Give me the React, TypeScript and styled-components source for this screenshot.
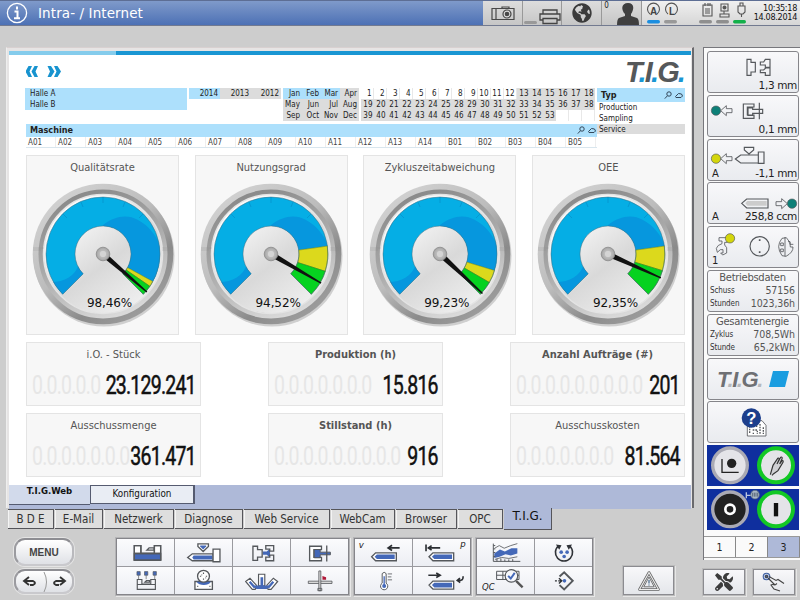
import * as React from 'react';
import styled, { createGlobalStyle } from 'styled-components';
import { FaGlobeAmericas, FaTools } from 'react-icons/fa';

interface IGauge {
  title: string;
  value: number;
  label: string;
  yellow: number;
  green: number;
}

interface ICounter {
  title: string;
  value: string;
  zeros: number;
  bold?: boolean;
}

const GAUGES: IGauge[] = [
  { title: 'Qualitätsrate', value: 98.46, label: '98,46%', yellow: 28.9, green: 34.6 },
  { title: 'Nutzungsgrad', value: 94.52, label: '94,52%', yellow: -8, green: 17.7 },
  { title: 'Zykluszeitabweichung', value: 99.23, label: '99,23%', yellow: 16.8, green: 30 },
  { title: 'OEE', value: 92.35, label: '92,35%', yellow: -8, green: 17 },
];

const COUNTERS: ICounter[] = [
  { title: 'i.O. - Stück', value: '23.129.241', zeros: 5 },
  { title: 'Produktion (h)', value: '15.816', zeros: 7, bold: true },
  { title: 'Anzahl Aufträge (#)', value: '201', zeros: 9, bold: true },
  { title: 'Ausschussmenge', value: '361.471', zeros: 7 },
  { title: 'Stillstand (h)', value: '916', zeros: 9, bold: true },
  { title: 'Ausschusskosten', value: '81.564', zeros: 7 },
];

const MONTHS = ['Jan', 'Feb', 'Mar', 'Apr', 'May', 'Jun', 'Jul', 'Aug', 'Sep', 'Oct', 'Nov', 'Dec'];
const WEEKS = [
  1, 2, 3, 4, 5, 6, 7, 8, 9, 10, 11, 12, 13, 14, 15, 16, 17, 18,
  19, 20, 21, 22, 23, 24, 25, 28, 29, 30, 31, 32, 33, 34, 35, 36, 37, 38,
  39, 40, 41, 42, 43, 44, 45, 46, 47, 48, 49, 50, 51, 52, 53, null, null, null,
];
const MACHINES = [
  'A01', 'A02', 'A03', 'A04', 'A05', 'A06', 'A07', 'A08', 'A09', 'A10',
  'A11', 'A12', 'A13', 'A14', 'B01', 'B02', 'B03', 'B04', 'B05',
];
const TABS = [
  { name: 'B D E', width: 46 },
  { name: 'E-Mail', width: 48 },
  { name: 'Netzwerk', width: 70 },
  { name: 'Diagnose', width: 68 },
  { name: 'Web Service', width: 86 },
  { name: 'WebCam', width: 64 },
  { name: 'Browser', width: 61 },
  { name: 'OPC', width: 45 },
];

const BLUE = '#4468b8';
const LINE = '#55585c';

const point = (angle: number, radius: number) => {
  const rad = (angle * Math.PI) / 180;
  return `${(radius * Math.cos(rad)).toFixed(2)} ${(radius * Math.sin(rad)).toFixed(2)}`;
};

const sector = (from: number, to: number, inner = 28, outer = 57) => {
  const large = to - from > 180 ? 1 : 0;
  return `M${point(from, outer)}A${outer} ${outer} 0 ${large} 1 ${point(to, outer)}L${point(to, inner)}A${inner} ${inner} 0 ${large} 0 ${point(from, inner)}Z`;
};

const GaugeDial = ({ gauge, id }: { gauge: IGauge; id: string }) => {
  const needle = -225 + (gauge.value / 100) * 270;
  return (
    <svg width='150' height='150' viewBox='-75 -75 150 150'>
      <defs>
        <linearGradient id={`${id}-rim`} x1='0.1' y1='0' x2='0.9' y2='1'>
          <stop offset='0' stopColor='#d6d6d6' />
          <stop offset='0.45' stopColor='#bcbcbc' />
          <stop offset='0.7' stopColor='#8b8b8b' />
          <stop offset='1' stopColor='#a5a5a5' />
        </linearGradient>
        <linearGradient id={`${id}-ring`} x1='0.2' y1='0' x2='0.6' y2='1'>
          <stop offset='0' stopColor='#878787' />
          <stop offset='0.5' stopColor='#a9a9a9' />
          <stop offset='1' stopColor='#d9d9d9' />
        </linearGradient>
        <linearGradient id={`${id}-face`} x1='0.2' y1='0.2' x2='0.8' y2='1'>
          <stop offset='0' stopColor='#fafafa' />
          <stop offset='0.5' stopColor='#d9d9d9' />
          <stop offset='1' stopColor='#f2f2f2' />
        </linearGradient>
        <radialGradient id={`${id}-hub`}>
          <stop offset='0' stopColor='#e2e2e2' />
          <stop offset='1' stopColor='#a0a0a0' />
        </radialGradient>
        <clipPath id={`${id}-clip`}>
          <path d={sector(-225, gauge.yellow)} />
        </clipPath>
      </defs>
      <circle cx='1' cy='2' r='70.5' fill='#000' opacity='0.16' />
      <circle r='70.3' fill={`url(#${id}-rim)`} />
      <circle r='62' fill='none' stroke={`url(#${id}-ring)`} strokeWidth='5' />
      <circle r='59.5' fill={`url(#${id}-face)`} stroke='#e4e4e4' strokeWidth='1.5' />
      <path d='M-70-6h11M-70-4h8M59-6h11M59-4h9' stroke='#888' strokeWidth='0.5' opacity='0.6' />
      <g clipPath={`url(#${id}-clip)`}>
        <rect x='-60' y='-60' width='120' height='120' fill='#05aee5' />
        <path d='M0-29C12-38 24-40 35-34C45-29 54-18 57-8L62 45H20L0 0Z' fill='#0697de' />
        <path d='M-52 28C-38 28-28 22-24 10L-15 30L-40 60L-60 40Z' fill='#0697de' />
        <path d='M0-57v6M22-52l-2 5M40-40l-4 4M-22-52l2 5M-40-40l4 4' stroke='#078bc4' strokeWidth='0.6' />
      </g>
      <path d={sector(gauge.yellow, gauge.green)} fill='#dcd91c' stroke='#5b7a18' strokeWidth='0.5' />
      <path d={sector(gauge.green, 45)} fill='#06d220' stroke='#2a7a18' strokeWidth='0.5' />
      <path d={sector(-225, 45)} fill='none' stroke='#3c6c80' strokeWidth='0.5' />
      <path d='M4-2.6L58-0.7V0.7L4 2.6Z' fill='#111' transform={`rotate(${needle})`} />
      <circle r='6.8' fill={`url(#${id}-hub)`} stroke='#8a8a8a' strokeWidth='0.8' />
      <circle r='3.8' fill='#d4d4d4' stroke='#aaa' strokeWidth='0.6' />
    </svg>
  );
};

const Nozzle = ({ x, y }: { x: number; y: number }) => (
  <g transform={`translate(${x} ${y})`}>
    <path d='M0 12L12 0H75V24H12Z' fill='#fff' stroke={LINE} strokeWidth='4' />
    <path d='M9 12l7-7h54v14H16z' fill={BLUE} stroke='none' />
  </g>
);

const ToolText = styled.text`
  font: italic 26px 'DejaVu Sans', sans-serif;
  fill: #222;
  stroke: none;
`;

/* Every tool is drawn on a 172 x 82 canvas, one canvas per cell */
const TOOLS: Record<string, React.ReactNode> = {
  machine: (
    <>
      <path d='M52 20h20v24h41V20h19v44H52z' fill='#fff' />
      <path d='M52 44h80v20H52z' fill={BLUE} />
      <path d='M52 20h20v24h41V20h19v44H52zM52 44h80M90 34l7-7h15v7z' />
    </>
  ),
  injection: (
    <>
      <path d='M38 56L52 45h63v21H52z' fill='#fff' />
      <path d='M52 56l4-6h57v12H56z' fill={BLUE} stroke='none' />
      <path d='M115 31h21v38h-21z' fill='#fff' />
      <path d='M69 15h32v8L85 38L69 23z' fill='#fff' />
      <path d='M76 20h18v3l-9 9-9-9z' fill={BLUE} stroke='none' />
    </>
  ),
  mould: (
    <>
      <path d='M90 38h12l10-9v28l-10-9H90z' fill={BLUE} stroke='none' />
      <path d='M60 22h14v10h14v23H74v10H60zM123 20H99v11h12v6h12zM123 66H99V55h12v-6h12z' fill='none' />
    </>
  ),
  ejector: (
    <>
      <path d='M92 22H56v44h36V56H69V32h23z' fill='#fff' />
      <path d='M70 32h18v8h31v8H88v9H70z' fill={BLUE} strokeWidth='3' />
      <path d='M108 20v48' />
    </>
  ),
  heating: (
    <>
      <path d='M60 14h10v11H60zM83 14h10v11H83zM109 14h10v11h-10z' fill={BLUE} strokeWidth='2' />
      <path d='M65 25v12M88 25v12M114 25v12' strokeWidth='2' />
      <path d='M61 38h14v14h27V38h14v30H61zM61 53h55M84 46l5-5h9v5z' fill='none' strokeWidth='3.5' />
    </>
  ),
  drive: (
    <>
      <path d='M60 44h53v24H60z' fill='#fff' />
      <path d='M65 45h43c-6 13-36 13-43 0z' fill={BLUE} stroke='none' />
      <circle cx='86' cy='28' r='18' fill='#fff' />
      <path d='M86 17v4M86 35v4M75 28h4M93 28h4M80 24h2M92 33h2M67 59h3M104 59h3' strokeWidth='3.5' />
    </>
  ),
  fan: (
    <>
      <path d='M38 44l13-10 20 22-4 12H58zM135 44l-13-10-20 22 4 12h9z' fill='#fff' strokeWidth='3.5' />
      <path d='M50 45l16 18M122 45l-16 18' stroke={BLUE} strokeWidth='7' />
      <path d='M77 22h19v35H77z' fill='#fff' strokeWidth='3.5' />
      <path d='M83 31h8v25h19l-7 11H70l-7-11h20z' fill={BLUE} stroke='none' />
    </>
  ),
  robot: (
    <>
      <path d='M52 43h72v7H52z' fill='#ddd' strokeWidth='2.5' />
      <path d='M84 12h6v60h-6zM81 65h12v7H81z' fill='#ddd' strokeWidth='2.5' />
      <path d='M95 27l11 4v8H95z' fill='#b01838' stroke='none' />
    </>
  ),
  velocity: (
    <>
      <ToolText x='11' y='27'>v</ToolText>
      <path d='M100 27h35M112 19l-12 8 12 8' fill='none' stroke='#2c2f33' strokeWidth='5' />
      <Nozzle x={50} y={42} />
    </>
  ),
  pressure: (
    <>
      <path d='M39 17v20M45 27h37M56 20l-10 7 10 7' fill='none' stroke='#2c2f33' strokeWidth='5' />
      <ToolText x='143' y='25'>p</ToolText>
      <Nozzle x={48} y={42} />
    </>
  ),
  temperature: (
    <>
      <path d='M82 49V20q6-8 12 0v29a11 11 0 1 1-12 0z' fill='#fff' strokeWidth='3' />
      <path d='M88 28v30' stroke={BLUE} strokeWidth='4' />
      <circle cx='88' cy='58' r='6' fill={BLUE} stroke='none' />
      <path d='M99 21h13M99 30h11M99 39h13' strokeWidth='2.5' />
    </>
  ),
  plasticize: (
    <>
      <path d='M46 25h35M70 18l12 7-12 7' fill='none' stroke='#2c2f33' strokeWidth='5' />
      <path d='M151 28q4 14-15 13M142 34l-8 7 9 6' fill='none' stroke='#2c2f33' strokeWidth='5' />
      <Nozzle x={48} y={43} />
    </>
  ),
  trend: (
    <>
      <path d='M52 44l17-12 15 6 20-10h18v16l-20 6-16-4-18 8-16 4z' fill={BLUE} stroke='none' />
      <path d='M49 14v54h82M49 20h6M49 30h6M49 41h6M49 53h6M60 68v-8M72 68v-9M84 68v-6M96 68v-6M108 68v-7' fill='none' strokeWidth='3' />
      <path d='M53 28l14-8 15 8 20-8 20-6M54 62l20-6 22 3 26-5' fill='none' strokeWidth='2.5' />
    </>
  ),
  cycle: (
    <>
      <path d='M72 20A26 26 0 1 0 103 20' fill='none' stroke='#303338' strokeWidth='5' />
      <path d='M63 17l17 2-7 14zM112 17l-17 2 7 14z' fill='#303338' stroke='none' />
      <circle cx='79' cy='40' r='5.5' fill={BLUE} stroke='none' />
      <circle cx='97' cy='40' r='5.5' fill={BLUE} stroke='none' />
      <circle cx='88' cy='53' r='5.5' fill={BLUE} stroke='none' />
    </>
  ),
  quality: (
    <>
      <path d='M59 13h68v25H59zM59 25h68M78 13v25' fill='none' strokeWidth='3' />
      <path d='M118 42l20 20' stroke='#555' strokeWidth='7' />
      <circle cx='104' cy='27' r='19' fill='#f6f7fb' strokeWidth='3.5' />
      <path d='M94 27l8 8 12-17' fill='none' stroke={BLUE} strokeWidth='6' />
      <ToolText x='15' y='70'>QC</ToolText>
    </>
  ),
  target: (
    <>
      <path d='M74 29L88 16l26 26-26 26-14-13' fill='none' strokeWidth='6' />
      <path d='M60 42h6M70 42h8M72 34l9 8-9 8' fill='none' stroke='#2c2f33' strokeWidth='4' />
      <circle cx='89' cy='42' r='5.5' fill={BLUE} stroke='none' />
    </>
  ),
};

const Tool = ({ name }: { name: string }) => (
  <ToolCell>
    <svg width='57' height='27' viewBox='0 0 172 82' fill='none' stroke={LINE} strokeWidth='4'>
      {TOOLS[name]}
    </svg>
  </ToolCell>
);

const Drawing = ({ children }: { children: React.ReactNode }) => (
  <svg width='92' height='40' viewBox='0 0 276 120' fill='none' stroke='#55585c' strokeWidth='3.5'>
    {children}
  </svg>
);

const SearchMarks = () => (
  <svg width='20' height='9' viewBox='0 0 20 9' fill='none' stroke='#33475a'>
    <circle cx='5' cy='3' r='2.2' />
    <path d='M3.4 4.8L0.8 7.6M11.5 5.5l3-3 3 .5 1 2-1.5 1.5h-5z' />
  </svg>
);

const Header = () => (
  <HeaderBar>
    <Title>
      <svg width='22' height='22' viewBox='0 0 22 22' fill='none' stroke='#fff'>
        <circle cx='11' cy='11' r='9.6' strokeWidth='1.3' />
        <path d='M11 4.5v3M8.5 9.5h3v6.5M8 16.3h6' strokeWidth='2' />
      </svg>
      Intra- / Internet
    </Title>
    <StatusCell $width={40}>
      <svg width='24' height='15' viewBox='0 0 24 15' fill='none' stroke='#484848' strokeWidth='1.2'>
        <path d='M1 2.5h22v11H1zM5 2.5v11M11 2.5V1h7v1.5' />
        <circle cx='16' cy='8' r='4' fill='#ddd' />
        <circle cx='16' cy='8' r='1.7' fill='#484848' />
      </svg>
    </StatusCell>
    <StatusCell $width={39}>
      <svg width='38' height='24' viewBox='0 0 38 24' fill='none' stroke='#444' strokeWidth='1.3'>
        <rect x='1' y='20' width='13' height='3' rx='1.5' fill='#999' stroke='none' />
        <path d='M20 13V9h14v4M20 19h-3v-6h20v6h-3M20 17.5h14v5H20z' />
      </svg>
    </StatusCell>
    <StatusCell $width={40}>
      <FaGlobeAmericas size={20} color='#3b3b3b' />
    </StatusCell>
    <StatusCell $width={40}>
      <UserCount>0</UserCount>
      <svg width='23' height='24' viewBox='0 0 23 24' fill='#3f3f3f'>
        <path d='M12 2c7 0 6 7 3 11v2l6 2q2 1 2 7H1q0-6 2-7l6-2v-2C5 9 5 2 12 2z' />
      </svg>
    </StatusCell>
    <StatusTray>
      <svg width='108' height='24' viewBox='0 0 108 24' fill='none' stroke='#555' strokeWidth='1.1'>
        <path d='M6 13A6 6 0 1 1 13 13M24 13A6 6 0 1 1 31 13' />
        <TrayText x='6' y='14'>A</TrayText>
        <TrayText x='25' y='14'>L</TrayText>
        <path d='M59 4h9v11h-9zM61 2v3M64 2v3M66 2v3M61 8h5M61 10h5M61 12h5M77 3h7v7h-7zM80 10v3M76 13h9v3h-9zM96 2h3v3h-3zM94 5h7v6l-2 2h-3l-2-2zM97.5 13v3' />
        <circle cx='80.5' cy='6.5' r='1.5' fill='#555' />
        <rect x='3' y='19' width='13' height='3.5' rx='1.7' fill='#1b8ee0' stroke='none' />
        <rect x='20' y='19' width='13' height='3.5' rx='1.7' fill='#999' stroke='none' />
        <rect x='55' y='19' width='13' height='3.5' rx='1.7' fill='#8f8f8f' stroke='none' />
        <rect x='72' y='19' width='13' height='3.5' rx='1.7' fill='#8f8f8f' stroke='none' />
        <rect x='89' y='19' width='13' height='3.5' rx='1.7' fill='#13b04a' stroke='none' />
      </svg>
      <Clock>
        <span>10:35:18</span>
        <span>14.08.2014</span>
      </Clock>
    </StatusTray>
  </HeaderBar>
);

const Filters = () => (
  <FilterArea>
    <FilterLeft>
      <FilterRow>
        <Halls>
          <span>Halle A</span>
          <span>Halle B</span>
        </Halls>
        <Years>
          <Cell $tone='blue'>2014</Cell>
          <Cell $tone='grey'>2013</Cell>
          <Cell $tone='grey'>2012</Cell>
        </Years>
        <Months>
          {MONTHS.map((month, i) => (
            <Cell key={month} $tone={i < 3 ? 'blue' : 'grey'}>{month}</Cell>
          ))}
        </Months>
        <Weeks>
          {WEEKS.map((week, i) => (
            <WeekCell key={i} $tone={i < 12 || week === null ? 'white' : 'grey'}>{week}</WeekCell>
          ))}
        </Weeks>
      </FilterRow>
      <MachineHead>
        Maschine
        <SearchMarks />
      </MachineHead>
      <MachineRow>
        {MACHINES.map((machine) => (
          <span key={machine}>{machine}</span>
        ))}
      </MachineRow>
    </FilterLeft>
    <TypeBox>
      <TypeHead>
        Typ
        <SearchMarks />
      </TypeHead>
      <TypeItem>Production</TypeItem>
      <TypeItem>Sampling</TypeItem>
      <TypeItem $active>Service</TypeItem>
    </TypeBox>
  </FilterArea>
);

const Dashboard = () => (
  <Page>
    <Stripe />
    <LogoRow>
      <svg width='38' height='12' viewBox='0 0 38 12' fill='#1793cf'>
        <path d='M2.5 0H6L3.500 5.500L6 11H2.500L-0.500 5.500zM8.500 0H12L9.500 5.500L12 11H8.500L5.500 5.500zM25 0h-3.500L24 5.500L21.500 11H25l3.500-5.500zM31.500 0H28L30.500 5.500L28 11h3.500l3.500-5.500z' />
      </svg>
      <Logo $size={29}>
        T<i>.</i>I<i>.</i>G<i>.</i>
      </Logo>
    </LogoRow>
    <Filters />
    <Gauges>
      {GAUGES.map((gauge, i) => (
        <GaugeCard key={gauge.title}>
          <CardTitle>{gauge.title}</CardTitle>
          <GaugeDial gauge={gauge} id={`g${i}`} />
          <GaugeValue>{gauge.label}</GaugeValue>
        </GaugeCard>
      ))}
    </Gauges>
    <Counters>
      {COUNTERS.map((counter) => (
        <CounterCard key={counter.title}>
          <CardTitle $bold={counter.bold}>{counter.title}</CardTitle>
          <Digits>
            <Ghost aria-hidden>{Array(counter.zeros).fill('0').join('.')}</Ghost>
            <Value>{counter.value}</Value>
          </Digits>
        </CounterCard>
      ))}
    </Counters>
    <SubTabs>
      <SubTabActive>T.I.G.Web</SubTabActive>
      <SubTab>Konfiguration</SubTab>
    </SubTabs>
  </Page>
);

const Sidebar = () => (
  <SidebarBox>
    <SideButton>
      <Drawing>
        <path d='M117 22h12v9h13v29h-13v10h-12zM186 22h-14l-5 8h-10v9h15v7h14zM186 70h-14v-8h-15v-8h10l6-6h13z' />
      </Drawing>
      <SideValue>1,3 mm</SideValue>
    </SideButton>
    <SideButton>
      <Drawing>
        <circle cx='24' cy='44' r='14' fill='#0d8078' strokeWidth='2' />
        <path d='M38 44l17-15v9h17v12H55v9z' strokeWidth='2.5' />
        <path d='M138 24h-32v43h32v-10h-20V33h20zM120 36h14v4h30v12h-30v6h-14zM154 20v50' />
      </Drawing>
      <SideValue>0,1 mm</SideValue>
    </SideButton>
    <SideButton>
      <Drawing>
        <circle cx='24' cy='56' r='14' fill='#d4d60c' strokeWidth='2' />
        <path d='M38 56l17-15v9h17v12H55v9z' strokeWidth='2.5' />
        <path d='M82 57l16-12h53v24H98zM151 36h17v34h-17zM109 22h28v8l-14 12-14-12z' />
      </Drawing>
      <SideMode>A</SideMode>
      <SideValue>-1,1 mm</SideValue>
    </SideButton>
    <SideButton>
      <Drawing>
        <path d='M101 61l15-13h64v27h-64z' />
        <path d='M118 54h58v14h-58l-6-7z' fill='#ccc' stroke='none' />
        <circle cx='252' cy='62' r='14' fill='#0d8078' strokeWidth='2' />
        <path d='M238 62l-17-15v9h-17v12h17v9z' strokeWidth='2.5' />
      </Drawing>
      <SideMode>A</SideMode>
      <SideValue>258,8 ccm</SideValue>
    </SideButton>
    <SideButton>
      <Drawing>
        <path d='M58 32H33v10h9v8q-14 4-17 14l3 12 9-8h8v10h-7l6 6 12-6V62l-6-8v-8h8z' strokeWidth='2.5' />
        <circle cx='66' cy='34' r='14' fill='#d4d60c' strokeWidth='2' />
        <circle cx='155' cy='58' r='29' />
        <path d='M155 37v5M155 73v5' strokeWidth='5' />
        <path d='M222 34q-20 24 0 52l12 2q22-12 21-28h-8q3-14-12-28zM231 30v58M218 48h8v8h-8zM218 66h8v8h-8zM240 44h6v8h10' strokeWidth='2.5' />
      </Drawing>
      <SideMode>1</SideMode>
    </SideButton>
    <DataButton>
      <DataTitle>Betriebsdaten</DataTitle>
      <DataRow><small>Schuss</small>57156</DataRow>
      <DataRow><small>Stunden</small>1023,36h</DataRow>
    </DataButton>
    <DataButton>
      <DataTitle>Gesamtenergie</DataTitle>
      <DataRow><small>Zyklus</small>708,5Wh</DataRow>
      <DataRow><small>Stunde</small>65,2kWh</DataRow>
    </DataButton>
    <SideButton $center>
      <Logo $size={22} $muted>
        T<i>.</i>I<i>.</i>G<i>.</i>
      </Logo>
      <svg width='20' height='16' viewBox='0 0 20 16'>
        <path d='M4 0h16l-4 16H0z' fill='#1a9de0' />
      </svg>
    </SideButton>
    <SideButton>
      <Drawing>
        <path d='M118 56h44l12 14v32h-56z' fill='#fff' strokeWidth='2.5' />
        <path d='M125 72v24M134 74h8M134 84h14v12M156 66v30M166 76v20M146 70v8M134 94h4' strokeWidth='4' strokeDasharray='5 3' />
        <circle cx='130' cy='48' r='29' fill='#1c3e8c' stroke='none' />
        <HelpText x='130' y='66'>?</HelpText>
      </Drawing>
    </SideButton>
    <MotorPanel>
      <svg width='92' height='41' viewBox='0 0 276 123' fill='none'>
        <circle cx='69' cy='61' r='52' fill='#e4e4e8' stroke='#aaaab4' strokeWidth='10' />
        <path d='M45 42v40h50' stroke='#222' strokeWidth='4' />
        <circle cx='74' cy='55' r='14' fill='#222' />
        <circle cx='207' cy='61' r='51' fill='#e4e4e8' stroke='#12c825' strokeWidth='12' />
        <path d='M190 89l8-28 14-21q5-3 4 4l-6 13 11-20q6-3 4 5l-7 15 7-10q5-1 3 5l-15 25-13 9-5 5' stroke='#333' strokeWidth='3.5' fill='#d0d0d4' />
      </svg>
    </MotorPanel>
    <MotorPanel>
      <svg width='92' height='41' viewBox='0 0 276 123' fill='none'>
        <path d='M118 10v18M118 19h16' stroke='#b9c4e0' strokeWidth='4' />
        <circle cx='69' cy='61' r='52' fill='#222' stroke='#aaaab4' strokeWidth='10' />
        <circle cx='69' cy='61' r='14' stroke='#fff' strokeWidth='8' />
        <circle cx='207' cy='61' r='51' fill='#e4e4e8' stroke='#12c825' strokeWidth='12' />
        <path d='M207 42v40' stroke='#111' strokeWidth='13' />
        <circle cx='144' cy='17' r='13' fill='#a9b7c6' stroke='#567' strokeWidth='2' />
        <path d='M137 11v12M142 11v12M147 11v12M152 11v12' stroke='#345' strokeWidth='2' />
      </svg>
    </MotorPanel>
    <PageTabs>
      <PageTab>1</PageTab>
      <PageTab>2</PageTab>
      <PageTab $active>3</PageTab>
    </PageTabs>
  </SidebarBox>
);

const Footer = () => (
  <FooterBar>
    <MenuColumn>
      <MenuButton>MENU</MenuButton>
      <HistoryButton>
        <svg width='54' height='20' viewBox='0 0 54 20' fill='none' stroke='#333' strokeWidth='1.9'>
          <path d='M27 0q5 10 0 20' stroke='#999' strokeWidth='1' />
          <path d='M12 5L7 9l5 4M7 9h9q4 2 0 4h-3M43 5l5 4-5 4M48 9h-9q-4 2 0 4h3' />
        </svg>
      </HistoryButton>
    </MenuColumn>
    <ToolGroup $columns={4}>
      {['machine', 'injection', 'mould', 'ejector', 'heating', 'drive', 'fan', 'robot'].map((name) => (
        <Tool key={name} name={name} />
      ))}
    </ToolGroup>
    <ToolGroup $columns={2}>
      {['velocity', 'pressure', 'temperature', 'plasticize'].map((name) => (
        <Tool key={name} name={name} />
      ))}
    </ToolGroup>
    <ToolGroup $columns={2}>
      {['trend', 'cycle', 'quality', 'target'].map((name) => (
        <Tool key={name} name={name} />
      ))}
    </ToolGroup>
    <AlarmButton>
      <svg width='22' height='20' viewBox='0 0 22 20' fill='none' stroke='#666' strokeLinejoin='round'>
        <path d='M11 1.5L20.5 18.5H1.5z' strokeWidth='2.6' />
        <path d='M11 1.5L20.5 18.5H1.5z' stroke='#eee' strokeWidth='1.1' />
        <path d='M11 6L16.2 15.800H5.800z' strokeWidth='0.9' />
        <path d='M11 9v3.500M11 13.500v1' strokeWidth='1.200' stroke='#468' />
      </svg>
    </AlarmButton>
  </FooterBar>
);

const App = () => (
  <Screen>
    <GlobalStyle />
    <Header />
    <Body>
      <MainColumn>
        <Window>
          <Dashboard />
        </Window>
        <TabRow>
          {TABS.map((tab) => (
            <Tab key={tab.name} $width={tab.width}>{tab.name}</Tab>
          ))}
          <TabActive>T.I.G.</TabActive>
        </TabRow>
        <Footer />
      </MainColumn>
      <SideColumn>
        <Sidebar />
        <SideFooter>
          <FooterButton>
            <FaTools size={18} color='#3c3c3c' />
          </FooterButton>
          <FooterButton>
            <svg width='24' height='20' viewBox='0 0 24 20' fill='none' stroke='#444' strokeWidth='1.1'>
              <circle cx='4.5' cy='4.5' r='3.3' fill='#b8c8e8' stroke='#3f5fa0' />
              <circle cx='4.5' cy='4.5' r='1.2' fill='#3f5fa0' />
              <path d='M6 6l7 7q-3-1-4 0l3 4 6 2M7 4.5l7 4 2-1 6 4M13 13l2-1.5' />
            </svg>
          </FooterButton>
        </SideFooter>
      </SideColumn>
    </Body>
  </Screen>
);

export default App;

const GlobalStyle = createGlobalStyle`
  body {
    margin: 0;
  }
  * {
    box-sizing: border-box;
  }
  svg {
    display: block;
    flex: none;
  }
`;

const Screen = styled.div`
  width: 800px;
  height: 600px;
  overflow: hidden;
  display: flex;
  flex-direction: column;
  background: #cdcdcd;
  color: #222;
  font-family: 'DejaVu Sans Condensed', 'DejaVu Sans', sans-serif;
  white-space: nowrap;
`;

const HeaderBar = styled.header`
  display: flex;
  height: 26px;
  flex: none;
  border-top: 1px solid #5d6e94;
  border-bottom: 1px solid #727a90;
`;

const Title = styled.h1`
  margin: 0;
  width: 483px;
  padding: 0 5px 0 6px;
  display: flex;
  align-items: center;
  gap: 10px;
  color: #fff;
  font: 13.5px 'DejaVu Sans', sans-serif;
  letter-spacing: 0.1px;
  background: linear-gradient(#7f9aca, #4d71b5);
`;

const StatusCell = styled.div<{ $width: number }>`
  width: ${(props) => props.$width}px;
  display: flex;
  align-items: center;
  justify-content: center;
  background: linear-gradient(#ddd, #c6c6c6);
  border-right: 1px solid #999;
`;

const UserCount = styled.span`
  font-size: 8px;
  align-self: flex-start;
  margin-right: 7px;
`;

const StatusTray = styled.div`
  flex: 1;
  display: flex;
  align-items: center;
  justify-content: space-between;
  padding: 0 3px 0 2px;
  background: linear-gradient(#f0f0f0, #d6d6d6);
`;

const TrayText = styled.text`
  font: bold 10px 'Liberation Sans', sans-serif;
  fill: #444;
  stroke: none;
`;

const Clock = styled.div`
  display: flex;
  flex-direction: column;
  align-items: flex-end;
  font-size: 9px;
  line-height: 9px;
  letter-spacing: -0.3px;
  color: #111;
  margin-left: -8px;
`;

const Body = styled.div`
  display: flex;
  flex: 1;
  padding-top: 21px;
`;

const MainColumn = styled.div`
  width: 703px;
  display: flex;
  flex-direction: column;
`;

const Window = styled.main`
  width: 688px;
  height: 461px;
  margin-left: 6px;
  padding: 3px 0 0 2px;
  border-top: 1px solid #d8d0d0;
  border-left: 1px solid #eee;
  border-right: 2px solid #6a6a6e;
  background: #e6e4e4;
`;

const Page = styled.div`
  width: 682px;
  height: 457px;
  background: #fff;
`;

const Stripe = styled.div`
  height: 4px;
  background: linear-gradient(90deg, #85ccec 107px, #1a96d3 107px);
`;

const LogoRow = styled.div`
  display: flex;
  justify-content: space-between;
  align-items: center;
  height: 33px;
  padding: 0 7px 0 17px;
`;

const Logo = styled.div<{ $size: number; $muted?: boolean }>`
  font: italic bold ${(props) => props.$size}px 'Liberation Sans', sans-serif;
  letter-spacing: ${(props) => -props.$size * 0.065}px;
  color: ${(props) => (props.$muted ? '#6e7074' : '#55585a')};
  margin-top: 2px;
  i {
    color: ${(props) => (props.$muted ? '#b5b8bc' : '#1a96d3')};
  }
`;

const FilterArea = styled.section`
  display: flex;
  height: 61px;
  padding-left: 16px;
  font-size: 8px;
  line-height: 11px;
`;

const FilterLeft = styled.div`
  width: 572px;
`;

const FilterRow = styled.div`
  display: flex;
  gap: 2px;
  height: 36px;
  align-items: flex-start;
`;

const Halls = styled.div`
  width: 162px;
  height: 22px;
  padding-left: 5px;
  display: flex;
  flex-direction: column;
  background: #ade0fc;
`;

const Cell = styled.span<{ $tone: 'blue' | 'grey' | 'white' }>`
  height: 11px;
  padding-right: 2px;
  text-align: right;
  background: ${(props) => ({ blue: '#ade0fc', grey: '#dcdcdc', white: '#fff' })[props.$tone]};
`;

const WeekCell = styled(Cell)`
  padding-right: 1.5px;
  ${(props) => props.$tone === 'white' && 'border: solid #e8e8e8; border-width: 0 1px 0 0;'}
`;

const Years = styled.div`
  display: grid;
  grid-template-columns: 31px 31px 30px;
  width: 92px;
`;

const Months = styled.div`
  display: grid;
  grid-template-columns: repeat(4, 1fr);
  width: 76px;
`;

const Weeks = styled.div`
  display: grid;
  grid-template-columns: repeat(18, 1fr);
  width: 234px;
`;

const MachineHead = styled.div`
  display: flex;
  align-items: center;
  justify-content: space-between;
  height: 13px;
  margin-left: 1px;
  padding: 0 0 0 4px;
  font-weight: bold;
  font-size: 9px;
  background: #ade0fc;
`;

const MachineRow = styled.div`
  display: grid;
  grid-template-columns: repeat(19, 30px);
  margin-left: 1px;
  width: 571px;
  height: 11px;
  overflow: hidden;
  border-bottom: 1px solid #d9e6ee;
  color: #444;
  span {
    padding-left: 2px;
    border-right: 1px solid #eee;
  }
`;

const TypeBox = styled.div`
  width: 88px;
`;

const TypeHead = styled.div`
  display: flex;
  align-items: center;
  justify-content: space-between;
  height: 14px;
  padding: 0 1px 0 4px;
  font-weight: bold;
  font-size: 9px;
  background: #ade0fc;
`;

const TypeItem = styled.div<{ $active?: boolean }>`
  height: 10.8px;
  padding-left: 2px;
  background: ${(props) => (props.$active ? '#dcdcdc' : '#fff')};
`;

const Gauges = styled.section`
  display: grid;
  grid-template-columns: repeat(4, 153px);
  justify-content: space-between;
  padding: 0 6px 0 17px;
  margin-top: 6px;
`;

const Card = styled.div`
  display: flex;
  flex-direction: column;
  align-items: center;
  border: 1px solid #e4e4e4;
  background: #f7f7f7;
`;

const GaugeCard = styled(Card)`
  height: 180px;
  padding-top: 4px;
  svg {
    margin-top: 3px;
  }
`;

const CardTitle = styled.h2<{ $bold?: boolean }>`
  margin: 0;
  font-size: 11px;
  line-height: 16px;
  font-weight: ${(props) => (props.$bold ? 'bold' : 'normal')};
  color: #555;
`;

const GaugeValue = styled.span`
  margin-top: -34px;
  margin-left: 14px;
  font: 12px/16px 'DejaVu Sans', sans-serif;
  letter-spacing: -0.1px;
  color: #111;
`;

const Counters = styled.section`
  display: grid;
  grid-template-columns: repeat(3, 175px);
  grid-auto-rows: 64px;
  row-gap: 7px;
  justify-content: space-between;
  padding: 0 6px 0 17px;
  margin-top: 7px;
  height: 143px;
`;

const CounterCard = styled(Card)`
  padding-top: 4px;
`;

/* The squeeze gives the tall, narrow figures of a mechanical counter */
const Digits = styled.div`
  display: flex;
  justify-content: space-between;
  align-self: flex-start;
  width: 210px;
  margin-top: 8px;
  margin-left: 5px;
  margin-right: -60px;
  transform: scaleX(0.78);
  transform-origin: left;
  font: 25px/29px Roboto, sans-serif;
  letter-spacing: -1px;
`;

const Ghost = styled.span`
  color: #e6e6e6;
`;

const Value = styled.span`
  color: #111;
  -webkit-text-stroke: 0.5px #111;
`;

const SubTabs = styled.nav`
  display: flex;
  align-items: flex-start;
  height: 24px;
  background: #aeb9d8;
  font-size: 9.8px;
  color: #111;
`;

const SubTabActive = styled.div`
  width: 81px;
  height: 20px;
  text-align: center;
  line-height: 12px;
  font-weight: bold;
  font-size: 9.5px;
  background: #d2daeb;
  border-bottom: 1px solid #555b70;
`;

const SubTab = styled.div`
  width: 105px;
  height: 19px;
  text-align: center;
  line-height: 16px;
  background: #e9edf4;
  border: 1px solid #555b70;
  border-right-width: 2px;
`;

const TabRow = styled.nav`
  display: flex;
  gap: 1px;
  height: 22px;
  padding-left: 8px;
  color: #333;
  font-size: 11.5px;
`;

const Tab = styled.div<{ $width: number }>`
  width: ${(props) => props.$width}px;
  height: 20px;
  margin-top: 1px;
  text-align: center;
  line-height: 19px;
  background: #dedede;
  border: solid #55555a;
  border-width: 1px 1px 1px 0;
  box-shadow: inset 1px 0 #f4f4f4;
`;

const TabActive = styled.div`
  width: 48px;
  text-align: center;
  line-height: 17px;
  font: 12px/17px 'DejaVu Sans', sans-serif;
  color: #111;
  background: #aeb9d8;
  border: solid #55555a;
  border-width: 0 1px 1px 0;
`;

const FooterBar = styled.footer`
  display: flex;
  align-items: flex-start;
  padding: 8px 0 0 14px;
`;

const MenuColumn = styled.div`
  display: flex;
  flex-direction: column;
  gap: 3px;
  width: 102px;
`;

const MenuButton = styled.button`
  width: 60px;
  height: 28px;
  padding: 0;
  border: 2px solid #aaa;
  border-color: #8d8d92 #b9b9bd #c9c9cd #9b9ba0;
  border-radius: 11px;
  box-shadow: 0 0 0 1px #e4e4e4;
  background: linear-gradient(#fff, #dfe1e6);
  font: bold 10px 'Liberation Sans', sans-serif;
  color: #444;
`;

const HistoryButton = styled(MenuButton)`
  height: 25px;
  display: grid;
  place-items: center;
`;

const ToolGroup = styled.div<{ $columns: number }>`
  display: grid;
  grid-template-columns: repeat(${(props) => props.$columns}, 57px);
  grid-auto-rows: 27px;
  gap: 1px;
  margin-right: 5px;
  border: 1px solid #85858a;
  background: #9a9a9f;
  box-shadow: 0 0 0 1px #b4b4b6, 1px 1px 0 1px #e8e8e8;
`;

const ToolCell = styled.div`
  background: linear-gradient(#fbfbfd, #eceef3);
`;

const FooterButton = styled.div`
  width: 42px;
  height: 26px;
  display: grid;
  place-items: center;
  border: 1px solid #8b8b90;
  box-shadow: 0 0 0 1px #bbb, 1px 1px 0 1px #e6e6e6;
  background: linear-gradient(#f8f8fa, #e4e6ea);
`;

const AlarmButton = styled(FooterButton)`
  width: 51px;
  height: 29px;
  margin: 28px 0 0 25px;
`;

const SideColumn = styled.div`
  width: 97px;
`;

const SidebarBox = styled.aside`
  height: 513px;
  padding: 3px 0 0 3px;
  display: flex;
  flex-direction: column;
  border: solid #77777c;
  border-width: 1px 0 0 1px;
  background: #fafafa;
`;

const SideButton = styled.div<{ $center?: boolean }>`
  width: 92px;
  height: 42px;
  flex: none;
  margin-bottom: 1.8px;
  display: grid;
  border: 1px solid #85858a;
  border-radius: 3px;
  background: linear-gradient(#f8f8fa, #e9ebef);
  > * {
    grid-area: 1 / 1;
  }
  ${(props) =>
    props.$center &&
    `
    display: flex;
    align-items: center;
    justify-content: center;
    gap: 7px;
  `}
`;

const SideValue = styled.span`
  align-self: end;
  justify-self: end;
  padding-right: 3px;
  font: 10.5px/13px 'DejaVu Sans', sans-serif;
  letter-spacing: -0.35px;
`;

const SideMode = styled(SideValue)`
  justify-self: start;
  padding-left: 4px;
  font-size: 10px;
`;

const DataButton = styled(SideButton)`
  display: block;
  padding: 0 3px 0 2px;
  color: #555;
`;

const DataTitle = styled.div`
  text-align: center;
  font: 10px/13px 'DejaVu Sans', sans-serif;
  letter-spacing: -0.3px;
`;

const DataRow = styled.div`
  display: flex;
  justify-content: space-between;
  align-items: center;
  font-size: 10.5px;
  line-height: 13px;
  letter-spacing: -0.1px;
  small {
    font-size: 8px;
    color: #333;
  }
`;

const HelpText = styled.text`
  font: bold 50px 'Liberation Sans', sans-serif;
  fill: #fff;
  stroke: none;
  text-anchor: middle;
`;

const MotorPanel = styled.div`
  width: 92px;
  height: 41px;
  flex: none;
  margin-bottom: 3px;
  background: #0f2f9e;
`;

const PageTabs = styled.nav`
  display: flex;
  height: 22px;
  margin: 3px 0 0 -3px;
  border: solid #999;
  border-width: 1px 0;
`;

const PageTab = styled.div<{ $active?: boolean }>`
  flex: 1;
  text-align: center;
  font-size: 10.5px;
  line-height: 20px;
  border-right: 1px solid #888;
  background: ${(props) => (props.$active ? '#aeb9d8' : '#fafafa')};
`;

const SideFooter = styled.div`
  display: flex;
  gap: 8px;
  padding-top: 9px;
`;
